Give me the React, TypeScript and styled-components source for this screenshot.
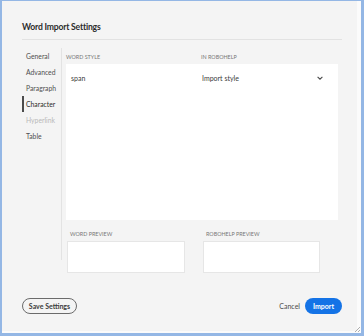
import styled, { createGlobalStyle } from "styled-components";

const GlobalStyle = createGlobalStyle`
  html, body {
    margin: 0;
    padding: 0;
    background: #94b7e5;
  }
  body {
    font-family: Lato, "Noto Sans", sans-serif;
  }
`;

const Frame = styled.div`
  position: relative;
  box-sizing: border-box;
  width: 364px;
  height: 336px;
  border-style: solid;
  border-color: #94b7e5;
  border-width: 1px 3px 3px 2px;
  display: flex;
`;

const Panel = styled.div`
  flex: 1;
  display: flex;
  flex-direction: column;
  background: #f4f4f4;
  border-right: 4px solid #fbfbfb;
  border-bottom: 2px solid #fbfbfb;
`;

const Header = styled.div`
  margin: 0 15px 0 20px;
  padding-top: 19px;
  border-bottom: 1px solid #e2e2e2;
`;

const Title = styled.h1`
  margin: 0 0 5px;
  font-size: 8.6px;
  letter-spacing: -0.2px;
  line-height: 14px;
  font-weight: 700;
  color: #2c2c2c;
`;

const Body = styled.div`
  display: flex;
  margin: 8px 19px 0 20px;
`;

const Nav = styled.nav`
  width: 39px;
  height: 212px;
  border-right: 1px solid #e3e3e3;
  display: flex;
  flex-direction: column;
`;

const NavItem = styled.div<{ $active?: boolean; $disabled?: boolean }>`
  height: 16px;
  line-height: 16px;
  padding-left: 2px;
  border-left: 2px solid ${(p) => (p.$active ? "#4b4b4b" : "transparent")};
  font-size: 6.8px;
  color: ${(p) => (p.$disabled ? "#b9b9b9" : p.$active ? "#2c2c2c" : "#505050")};
`;

const Content = styled.div`
  flex: 1;
  margin-left: 4px;
  display: flex;
  flex-direction: column;
`;

const Columns = styled.div`
  display: grid;
  grid-template-columns: 135px 1fr;
`;

const ColLabel = styled.div`
  height: 16px;
  line-height: 18px;
  font-size: 5.4px;
  text-transform: uppercase;
  color: #777;
`;

const Table = styled.div`
  height: 156px;
  background: #fff;
`;

const Row = styled(Columns)`
  padding: 9px 15px 0 5px;
  font-size: 7px;
  line-height: 10px;
  color: #3a3a3a;
`;

const Value = styled.div`
  display: flex;
  align-items: center;
  justify-content: space-between;
  margin-left: -4px;
`;

const Previews = styled.div`
  display: grid;
  grid-template-columns: 118px 117px;
  column-gap: 18px;
  margin: 7px 0 0 1px;
`;

const PreviewLabel = styled.div`
  height: 14px;
  line-height: 14px;
  padding-left: 3px;
  font-size: 5.4px;
  text-transform: uppercase;
  color: #777;
`;

const PreviewBox = styled.div`
  box-sizing: border-box;
  height: 32px;
  background: #fff;
  border: 1px solid #e6e6e6;
`;

const Footer = styled.div`
  margin-top: auto;
  display: flex;
  align-items: center;
  padding: 0 15px 17px 20px;
`;

const OutlineButton = styled.button`
  box-sizing: border-box;
  height: 16px;
  width: 55px;
  padding: 0;
  border: 1px solid #6b6b6b;
  border-radius: 8px;
  background: transparent;
  font-family: inherit;
  font-size: 7px;
  font-weight: 700;
  color: #3c3c3c;
`;

const Spacer = styled.div`
  flex: 1;
`;

const TextButton = styled.button`
  padding: 0;
  border: none;
  background: none;
  font-family: inherit;
  font-size: 7px;
  color: #4b4b4b;
  margin-right: 5px;
`;

const PrimaryButton = styled.button`
  box-sizing: border-box;
  height: 16px;
  width: 37px;
  padding: 0;
  border: none;
  border-radius: 8px;
  background: #1473e6;
  font-family: inherit;
  font-size: 7px;
  font-weight: 700;
  color: #fff;
`;

const Grip = styled.svg`
  position: absolute;
  right: 0;
  bottom: 0;
`;

const navItems = ["General", "Advanced", "Paragraph", "Character", "Hyperlink", "Table"];

const Chevron = () => (
  <svg width="6" height="4" viewBox="0 0 6 4">
    <path d="M0.6 0.8 L3 3.2 L5.4 0.8" fill="none" stroke="#4b4b4b" strokeWidth="1.1" />
  </svg>
);

export default function App() {
  return (
    <>
      <GlobalStyle />
      <Frame>
        <Panel>
          <Header>
            <Title>Word Import Settings</Title>
          </Header>
          <Body>
            <Nav>
              {navItems.map((item) => (
                <NavItem
                  key={item}
                  $active={item === "Character"}
                  $disabled={item === "Hyperlink"}
                >
                  {item}
                </NavItem>
              ))}
            </Nav>
            <Content>
              <Columns>
                <ColLabel>Word Style</ColLabel>
                <ColLabel>In RoboHelp</ColLabel>
              </Columns>
              <Table>
                <Row>
                  <div>span</div>
                  <Value>
                    <span>Import style</span>
                    <Chevron />
                  </Value>
                </Row>
              </Table>
              <Previews>
                <div>
                  <PreviewLabel>Word Preview</PreviewLabel>
                  <PreviewBox />
                </div>
                <div>
                  <PreviewLabel>RoboHelp Preview</PreviewLabel>
                  <PreviewBox />
                </div>
              </Previews>
            </Content>
          </Body>
          <Footer>
            <OutlineButton>Save Settings</OutlineButton>
            <Spacer />
            <TextButton>Cancel</TextButton>
            <PrimaryButton>Import</PrimaryButton>
          </Footer>
        </Panel>
        <Grip width="7" height="7" viewBox="0 0 7 7">
          <path d="M6 1 L1 6 M6 4 L4 6" stroke="#9a9a9a" strokeWidth="0.8" />
        </Grip>
      </Frame>
    </>
  );
}
